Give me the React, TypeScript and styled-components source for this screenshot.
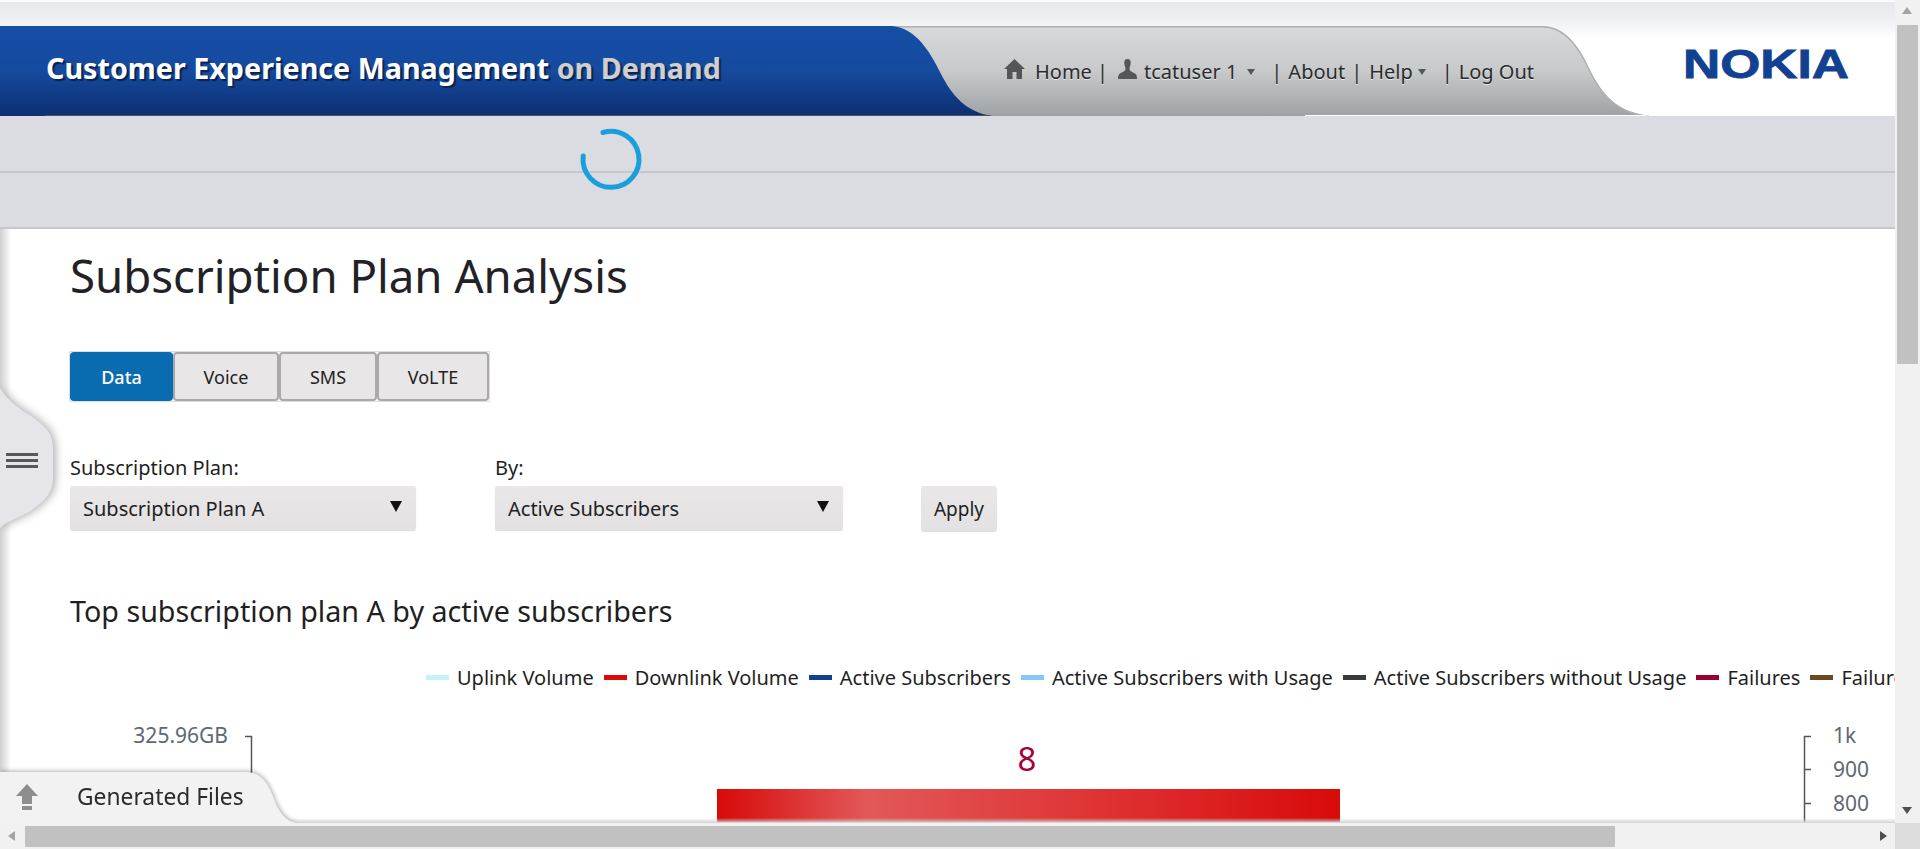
import styled, { createGlobalStyle } from 'styled-components';

const FONT = '"Noto Sans", "Open Sans", sans-serif';

const GlobalStyle = createGlobalStyle`
  html, body {
    margin: 0;
    height: 100%;
    overflow: hidden;
    background: #fff;
    font-family: ${FONT};
    color: #1f1f23;
  }
  #root { height: 100%; }
`;

const Shell = styled.div`
  display: flex;
  flex-direction: column;
  height: 100vh;
`;

const Viewport = styled.div`
  display: flex;
  flex: 1;
  min-height: 0;
`;

const Page = styled.main`
  position: relative;
  flex: 1;
  min-width: 0;
  overflow: hidden;
  background: #fff;
`;

const TopBand = styled.div`
  height: 26px;
  box-sizing: border-box;
  border-top: 2px solid #fafafa;
  background: linear-gradient(#e6e7ea, #f3f4f6);
`;

const Header = styled.header`
  display: flex;
  height: 90px;
  background: linear-gradient(#f3f4f6, #fff 12px);
`;

const BrandWrap = styled.div`
  position: relative;
  z-index: 2;
  width: 992px;
  flex: none;
`;

const Brand = styled.div`
  display: flex;
  align-items: center;
  height: 100%;
  padding: 0 0 7px 46px;
  box-sizing: border-box;
  clip-path: path('M0 0 H892 C916 2 930 26 940 46 C952 70 966 86 992 90 H0 Z');
  background: linear-gradient(#164ea5 0%, #154a9e 50%, #0e2f72 100%);
  font-size: 28.7px;
  font-weight: 700;
  color: #fff;
  white-space: pre;
  text-shadow: 2px 2px 1px #0a2250;

  &::after {
    content: '';
    position: absolute;
    left: 45px;
    right: 0;
    bottom: 0;
    height: 1px;
    background: #4c5360;
  }
`;

const BrandSuffix = styled.span`
  color: #cfcfcf;
`;

const NavTab = styled.nav`
  position: relative;
  z-index: 1;
  flex: none;
  display: flex;
  align-items: center;
  width: 760px;
  height: 90px;
  margin-left: -102px;
  padding: 1px 0 0 114px;
  box-sizing: border-box;
  clip-path: path('M0 0 H652 C676 0 690 22 700 44 C712 68 726 86 760 90 H0 Z');
  background: linear-gradient(#d8d9db 0%, #c7c9cb 50%, #9fa2a4 100%);
  font-size: 20px;
  color: #2b2b2e;
  text-shadow: 0 1px 0 #e8e8e8;
`;

const TabOutline = styled.svg`
  position: absolute;
  inset: 0;
  pointer-events: none;
`;

const NavIcon = styled.svg<{ $gap: number }>`
  flex: none;
  margin: -5px ${(p) => p.$gap}px 0 0;
  fill: #55565a;
`;

const NavText = styled.span<{ $gap: number }>`
  margin-right: ${(p) => p.$gap}px;
  white-space: nowrap;
`;

const NavCaret = styled.i<{ $gap: number }>`
  flex: none;
  width: 0;
  height: 0;
  margin: 0 ${(p) => p.$gap}px 0 0;
  border-left: 4px solid transparent;
  border-right: 4px solid transparent;
  border-top: 6px solid #55565a;
`;

const LogoBox = styled.div`
  flex: none;
  margin: 16px 0 0 33px;
`;

const GreyBar = styled.div<{ $height: number }>`
  height: ${(p) => p.$height}px;
  box-sizing: border-box;
  background: #dbdce1;
  border-bottom: 2px solid #c6c7cb;
`;

const Spinner = styled.svg`
  position: absolute;
  left: 578px;
  top: 126px;
`;

const Content = styled.div`
  padding-left: 70px;
`;

const Title = styled.h1`
  margin: 16px 0 0;
  font-size: 45.6px;
  line-height: 60px;
  font-weight: 400;
  color: #222226;
  white-space: nowrap;
`;

const Tabs = styled.div`
  display: inline-flex;
  vertical-align: top;
  margin-top: 47px;
  outline: 1px solid #dedede;
`;

const Tab = styled.div<{ $width: number; $active?: boolean }>`
  display: flex;
  align-items: center;
  justify-content: center;
  width: ${(p) => p.$width}px;
  height: 49px;
  box-sizing: border-box;
  border: 2px solid ${(p) => (p.$active ? '#0a6cb0' : '#a9a9a9')};
  border-radius: 4px;
  background: ${(p) => (p.$active ? '#0a6cb0' : '#e8e6e7')};
  color: ${(p) => (p.$active ? '#fff' : '#222')};
  font-size: 18px;
  font-weight: ${(p) => (p.$active ? 500 : 400)};
`;

const Filters = styled.div`
  display: flex;
  align-items: flex-end;
  margin-top: 55px;
`;

const Field = styled.div<{ $width: number }>`
  width: ${(p) => p.$width}px;
  flex: none;
`;

const FieldLabel = styled.div`
  font-size: 20px;
  line-height: 24px;
  margin-bottom: 6px;
`;

const Select = styled.div<{ $width: number }>`
  display: flex;
  align-items: center;
  justify-content: space-between;
  width: ${(p) => p.$width}px;
  height: 44px;
  padding: 0 14px 0 13px;
  box-sizing: border-box;
  border-radius: 2px;
  background: linear-gradient(#e9e7e8, #e3e1e2);
  box-shadow: 0 1px 1px #ddd;
  font-size: 20px;
`;

const SelectCaret = styled.i`
  width: 0;
  height: 0;
  margin-top: -3px;
  border-left: 6px solid transparent;
  border-right: 6px solid transparent;
  border-top: 11px solid #111;
`;

const ApplyButton = styled.div`
  display: flex;
  align-items: center;
  justify-content: center;
  width: 76px;
  height: 45px;
  margin-bottom: -1px;
  border-radius: 3px;
  background: linear-gradient(#e9e7e8, #e3e1e2);
  box-shadow: 0 1px 1px #ddd;
  font-size: 19px;
`;

const SectionHeading = styled.h2`
  margin: 63px 0 0;
  font-size: 28.7px;
  line-height: 36px;
  font-weight: 400;
  white-space: nowrap;
`;

const Legend = styled.div`
  display: flex;
  align-items: center;
  height: 24px;
  margin: 36px 0 0 346px;
  font-size: 20px;
  white-space: nowrap;
`;

const Swatch = styled.i<{ $color: string }>`
  flex: none;
  width: 23px;
  height: 5px;
  margin: 0 8px 0 10px;
  background: ${(p) => p.$color};
`;

const LegendItem = styled.span`
  display: contents;
`;

const Chart = styled.svg`
  display: block;
  font-family: ${FONT};
`;

const LeftShade = styled.div`
  position: absolute;
  left: 0;
  top: 229px;
  bottom: 0;
  width: 11px;
  background: linear-gradient(90deg, #cfcfcf, #fff);
`;

const HandleWrap = styled.div`
  position: absolute;
  left: 0;
  top: 388px;
  filter: drop-shadow(2px 0 5px rgba(0, 0, 0, 0.35));
`;

const Handle = styled.div`
  display: flex;
  flex-direction: column;
  justify-content: center;
  gap: 3px;
  width: 54px;
  height: 140px;
  padding: 4px 0 0 6px;
  box-sizing: border-box;
  clip-path: path('M0 0 C8 14 22 22 34 30 C48 40 53 48 53 60 V90 C53 104 46 112 32 122 C20 130 8 132 0 140 Z');
  background: #e6e6ea;
`;

const HandleLine = styled.i`
  display: block;
  width: 32px;
  height: 3px;
  background: #57585c;
`;

const BottomEdge = styled.div`
  position: absolute;
  left: 0;
  right: 0;
  bottom: 0;
  height: 5px;
  background: linear-gradient(rgba(200, 200, 200, 0), #d2d2d2);
`;

const FilesWrap = styled.div`
  position: absolute;
  left: 0;
  bottom: 0;
  filter: drop-shadow(1px -1px 2px rgba(0, 0, 0, 0.3));
`;

const FilesTab = styled.div`
  display: flex;
  align-items: center;
  width: 296px;
  height: 51px;
  padding: 0 0 2px 16px;
  box-sizing: border-box;
  clip-path: path('M0 0 H248 C268 2 272 24 278 36 C284 46 288 49 296 51 H0 Z');
  background: #f2f2f2;
  font-size: 22.8px;
  color: #2b2b2e;
`;

const FilesIcon = styled.svg`
  flex: none;
  margin-right: 39px;
  fill: #8e8e8e;
`;

const VScroll = styled.div`
  position: relative;
  flex: none;
  width: 25px;
  background: #f1f1f1;
`;

const VThumb = styled.div`
  position: absolute;
  left: 2px;
  right: 2px;
  top: 25px;
  height: 339px;
  background: #c1c1c1;
`;

const Arrow = styled.i<{ $dir: 'up' | 'down' | 'left' | 'right'; $dark?: boolean }>`
  position: absolute;
  width: 0;
  height: 0;
  border: 5px solid transparent;
  ${(p) => {
    const color = p.$dark ? '#505050' : '#a3a3a3';
    if (p.$dir === 'up') return `top: 7px; left: 7px; border-top: 0; border-bottom: 7px solid ${color};`;
    if (p.$dir === 'down') return `bottom: 9px; left: 7px; border-bottom: 0; border-top: 7px solid ${color};`;
    if (p.$dir === 'left') return `top: 8px; left: 8px; border-left: 0; border-right: 7px solid ${color};`;
    return `top: 8px; right: 8px; border-right: 0; border-left: 7px solid ${color};`;
  }}
`;

const HScroll = styled.div`
  display: flex;
  flex: none;
  height: 26px;
`;

const HTrack = styled.div`
  position: relative;
  flex: 1;
  background: #f1f1f1;
`;

const HThumb = styled.div`
  position: absolute;
  left: 25px;
  top: 3px;
  bottom: 2px;
  width: 1590px;
  background: #c1c1c1;
`;

const Corner = styled.div`
  flex: none;
  width: 25px;
  background: #dcdcdc;
`;

const navPath = 'M0 0 H652 C676 0 690 22 700 44 C712 68 726 86 760 90';

const tabs = [
  { label: 'Data', width: 103, active: true },
  { label: 'Voice', width: 106 },
  { label: 'SMS', width: 98 },
  { label: 'VoLTE', width: 112 },
];

const legend = [
  { label: 'Uplink Volume', color: '#c8f0f8' },
  { label: 'Downlink Volume', color: '#dc0a0a' },
  { label: 'Active Subscribers', color: '#124191' },
  { label: 'Active Subscribers with Usage', color: '#85c8f5' },
  { label: 'Active Subscribers without Usage', color: '#3a3a3a' },
  { label: 'Failures', color: '#9b0030' },
  { label: 'Failures Rate', color: '#6b4a20' },
];

export default function App() {
  return (
    <Shell>
      <GlobalStyle />
      <Viewport>
        <Page>
          <TopBand />
          <Header>
            <BrandWrap>
              <Brand>
                Customer Experience Management <BrandSuffix>on Demand</BrandSuffix>
              </Brand>
            </BrandWrap>
            <NavTab>
              <TabOutline width="760" height="90" fill="none">
                <path d={navPath} stroke="#aeb0b2" strokeWidth="3" />
                <path d="M415 89.5 H760" stroke="#fff" strokeWidth="1" />
              </TabOutline>
              <NavIcon $gap={10} width="21" height="20" viewBox="0 0 21 20">
                <path d="M10.500 0 L21 10 H18 V20 H12.500 V13 H8.500 V20 H3 V10 H0 Z" />
              </NavIcon>
              <NavText $gap={5}>Home</NavText>
              <NavText $gap={10}>|</NavText>
              <NavIcon $gap={7} width="19" height="20" viewBox="0 0 19 20">
                <path d="M9.500 0 C12 0 13 2 12.700 4.500 C12.500 6.500 11.500 8 11.500 10 C11.500 12 14.500 13 17 14.500 C18.500 15.500 19 17 19 20 H0 C0 17 0.500 15.500 2 14.500 C4.500 13 7.500 12 7.500 10 C7.500 8 6.500 6.500 6.300 4.500 C6 2 7 0 9.500 0 Z" />
              </NavIcon>
              <NavText $gap={10}>tcatuser 1</NavText>
              <NavCaret $gap={16} />
              <NavText $gap={6}>|</NavText>
              <NavText $gap={6}>About</NavText>
              <NavText $gap={7}>|</NavText>
              <NavText $gap={5}>Help</NavText>
              <NavCaret $gap={16} />
              <NavText $gap={6}>|</NavText>
              <NavText $gap={0}>Log Out</NavText>
            </NavTab>
            <LogoBox>
              <svg width="166" height="42" viewBox="0 0 166 42">
                <text
                  x="0"
                  y="36"
                  textLength="166"
                  lengthAdjust="spacingAndGlyphs"
                  fontFamily="Liberation Sans"
                  fontWeight="700"
                  fontSize="40"
                  fill="#124191"
                  stroke="#124191"
                  strokeWidth="0.8"
                >
                  NOKIA
                </text>
              </svg>
            </LogoBox>
          </Header>
          <GreyBar $height={57} />
          <GreyBar $height={56} />
          <Content>
            <Title>Subscription Plan Analysis</Title>
            <Tabs>
              {tabs.map((t) => (
                <Tab key={t.label} $width={t.width} $active={t.active}>
                  {t.label}
                </Tab>
              ))}
            </Tabs>
            <Filters>
              <Field $width={425}>
                <FieldLabel>Subscription Plan:</FieldLabel>
                <Select $width={346}>
                  Subscription Plan A
                  <SelectCaret />
                </Select>
              </Field>
              <Field $width={426}>
                <FieldLabel>By:</FieldLabel>
                <Select $width={348}>
                  Active Subscribers
                  <SelectCaret />
                </Select>
              </Field>
              <ApplyButton>Apply</ApplyButton>
            </Filters>
            <SectionHeading>Top subscription plan A by active subscribers</SectionHeading>
            <Legend>
              {legend.map((l) => (
                <LegendItem key={l.label}>
                  <Swatch $color={l.color} />
                  {l.label}
                </LegendItem>
              ))}
            </Legend>
            <Chart width="1825" height="133" viewBox="0 0 1825 133">
              <defs>
                <linearGradient id="barFill" x1="0" x2="1" y1="0" y2="0">
                  <stop offset="0" stopColor="#d80a0a" />
                  <stop offset="0.24" stopColor="#e25858" />
                  <stop offset="0.7" stopColor="#de2a2a" />
                  <stop offset="1" stopColor="#d80a0a" />
                </linearGradient>
              </defs>
              <text x="158" y="54" textAnchor="end" fontSize="21" fill="#5f6872">
                325.96GB
              </text>
              <path d="M175 47.500 H181.500 V133" fill="none" stroke="#555" strokeWidth="1.500" />
              <rect x="647" y="100" width="623" height="33" fill="url(#barFill)" />
              <text x="957" y="82" textAnchor="middle" fontSize="33" fill="#a8003a">
                8
              </text>
              <path d="M1741 47.500 H1734.500 V133 M1734.500 80.500 H1741 M1734.500 114.500 H1741" fill="none" stroke="#555" strokeWidth="1.500" />
              <text x="1763" y="54" fontSize="21" fill="#5f6872">1k</text>
              <text x="1763" y="88" fontSize="21" fill="#5f6872">900</text>
              <text x="1763" y="122" fontSize="21" fill="#5f6872">800</text>
            </Chart>
          </Content>
          <Spinner width="66" height="66" viewBox="0 0 66 66">
            <path
              d="M25 6.500 A28 28 0 1 1 5.200 30"
              fill="none"
              stroke="#1a9fdc"
              strokeWidth="5"
              strokeLinecap="round"
            />
          </Spinner>
          <LeftShade />
          <HandleWrap>
            <Handle>
              <HandleLine />
              <HandleLine />
              <HandleLine />
            </Handle>
          </HandleWrap>
          <BottomEdge />
          <FilesWrap>
            <FilesTab>
              <FilesIcon width="22" height="26" viewBox="0 0 22 26">
                <path d="M11 0 L22 12 H16 V20 H6 V12 H0 Z M6 22 H16 V26 H6 Z" />
              </FilesIcon>
              Generated Files
            </FilesTab>
          </FilesWrap>
        </Page>
        <VScroll>
          <Arrow $dir="up" />
          <VThumb />
          <Arrow $dir="down" $dark />
        </VScroll>
      </Viewport>
      <HScroll>
        <HTrack>
          <Arrow $dir="left" />
          <HThumb />
          <Arrow $dir="right" $dark />
        </HTrack>
        <Corner />
      </HScroll>
    </Shell>
  );
}
